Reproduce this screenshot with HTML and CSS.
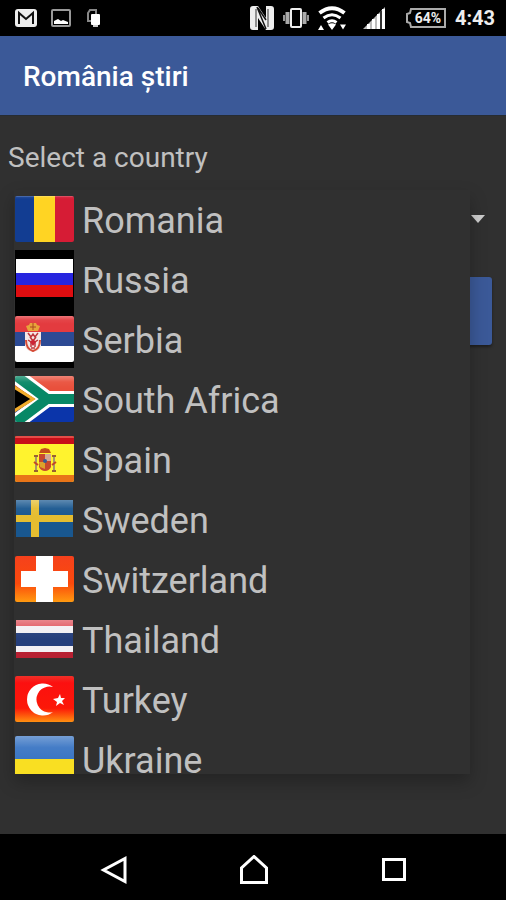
FILE: index.html
```
<!DOCTYPE html>
<html lang="ro">
<head>
<title>România știri</title>
<meta charset="utf-8">
<meta name="viewport" content="width=device-width, initial-scale=1.0">
<link rel="stylesheet" href="styles.css">
</head>
<body>
<div class="statusBar">
	<div class="notifications">
		<svg width="22" height="18" viewBox="0 0 22 18"><rect width="22" height="18" rx="3" fill="#eee"/><path d="M4 15V4l7 6 7-6v11" fill="none" stroke="#111" stroke-width="2"/></svg>
		<svg width="20" height="18" viewBox="0 0 20 18"><rect x="1" y="1" width="18" height="16" rx="1" fill="none" stroke="#999" stroke-width="2"/><path d="M3 15v-3l4-2 3 2 2-1 5 2v2z" fill="#fff"/></svg>
		<svg width="16" height="18" viewBox="0 0 16 18"><path d="M6 12H3V4l2-3h6v4" fill="none" stroke="#888" stroke-width="2"/><rect x="6" y="5" width="9" height="11" rx="1" fill="#fff"/><path d="M8 16h5v2H8z" fill="#ccc"/></svg>
	</div>
	<div class="indicators">
		<svg width="24" height="24" viewBox="0 0 24 24"><path d="M3 0h5l8 12V0h5q3 0 3 3v18q0 3-3 3h-5L8 12v12H3q-3 0-3-3V3q0-3 3-3z" fill="#eee"/><path d="M6 3v18M18 3v18" stroke="#333" stroke-width="1"/><path d="M7 1l9 22M8 2l8 12" stroke="#111" stroke-width="1.500"/></svg>
		<svg width="26" height="20" viewBox="0 0 26 20"><rect x="8" y="1" width="10" height="18" rx="1" fill="none" stroke="#eee" stroke-width="2"/><path d="M4.500 4v12M21.500 4v12" stroke="#aaa" stroke-width="4"/><path d="M1 7v6M25 7v6" stroke="#999" stroke-width="2"/></svg>
		<svg class="wifiIcon" width="28" height="24" viewBox="0 0 28 24"><g fill="none" stroke="#fff" stroke-width="4"><path d="M1.500 7Q14-2.500 26.500 7"/><path d="M5.500 12q8.500-6.500 17 0" stroke-width="3"/><path d="M9.500 16.500q4.500-3.500 9 0" stroke-width="3"/></g><path d="M10 18.500q4-2.500 8 0L14 24zM0 24l3-5 3 5zM22 18.500h6l-3 5z" fill="#fff"/></svg>
		<svg class="signalIcon" width="22" height="22" viewBox="0 0 22 22"><path d="M0 22L22 0v22z" fill="#bbb"/><path d="M18 4v18" stroke="#333" stroke-width="2"/><path d="M20.500 2v20M15.500 7v15M10.500 12v10M5.500 17v5" stroke="#fff" stroke-width="3"/></svg>
		<div class="battery">
			<svg width="40" height="20" viewBox="0 0 40 20"><path d="M5 1h34v18H5l-1-4-3-1V6l3-1z" fill="none" stroke="#aaa" stroke-width="2"/></svg>
			<span class="batteryLevel">64%</span>
		</div>
		<span class="clock">4:43</span>
	</div>
</div>
<header class="appBar">
	<h1>România știri</h1>
</header>
<main class="content">
	<label class="countryLabel" for="country">Select a country</label>
	<div class="spinner">
		<select id="country">
			<option value="ro" selected>Romania</option>
			<option value="ru">Russia</option>
			<option value="rs">Serbia</option>
			<option value="za">South Africa</option>
			<option value="es">Spain</option>
			<option value="se">Sweden</option>
			<option value="ch">Switzerland</option>
			<option value="th">Thailand</option>
			<option value="tr">Turkey</option>
			<option value="ua">Ukraine</option>
		</select>
		<svg class="caret" width="14" height="8" viewBox="0 0 14 8"><path d="M0 0h14L7 8z" fill="#ccc"/></svg>
	</div>
	<button class="submitButton" type="button" aria-label="OK"></button>

	<ul class="countryList" role="listbox" aria-label="Select a country">
		<li class="country" role="option" aria-selected="true">
			<svg class="flag" viewBox="0 0 60 60">
				<defs>
					<linearGradient id="shine" x2="0" y2="1"><stop offset="0" stop-color="#fff" stop-opacity=".3"/><stop offset=".5" stop-color="#fff" stop-opacity=".05"/><stop offset="1" stop-color="#fff" stop-opacity="0"/></linearGradient>
					<linearGradient id="fire" x2="0" y2="1"><stop offset="0" stop-color="#f5411c"/><stop offset=".6" stop-color="#fb4a0c"/><stop offset="1" stop-color="#ff9a10"/></linearGradient>
					<linearGradient id="turk" x2="0" y2="1"><stop offset="0" stop-color="#f03028"/><stop offset=".15" stop-color="#fc1010"/><stop offset=".7" stop-color="#fc1808"/><stop offset="1" stop-color="#ff9010"/></linearGradient>
					<clipPath id="round"><rect x="1" y="6" width="59" height="46" rx="2"/></clipPath>
				</defs>
				<g clip-path="url(#round)"><path d="M1 6h19v46H1z" fill="#123d92"/><path d="M20 6h21v46H20z" fill="#ffd423"/><path d="M41 6h19v46H41z" fill="#d61c35"/><path d="M1 6h59v3H1z" fill="url(#shine)"/></g>
			</svg>
			<span class="countryName">Romania</span>
		</li>
		<li class="country" role="option">
			<svg class="flag" viewBox="0 0 60 60"><path d="M1 0h59v60H1z" fill="#000"/><path d="M2 9h57v14H2z" fill="#fff"/><path d="M2 23h57v12H2z" fill="#2725df"/><path d="M2 35h57v12H2z" fill="#df0d10"/></svg>
			<span class="countryName">Russia</span>
		</li>
		<li class="country" role="option">
			<svg class="flag" viewBox="0 0 60 60">
				<path d="M1 0h59v58H1z" fill="#000"/>
				<g clip-path="url(#round)"><path d="M1 6h59v16H1z" fill="#e33b3f"/><path d="M1 22h59v14H1z" fill="#2c4a94"/><path d="M1 36h59v16H1z" fill="#fff"/><path d="M1 6h59v8H1z" fill="url(#shine)"/></g>
				<path d="M14 21l-2-5 3-1 1-2h6l1 2 3 1-2 5z" fill="#e8a33a"/><path d="M16 17h6M19 13v7" stroke="#a9481e"/>
				<path d="M11 22h16v14q-1 5-8 6-7-1-8-6z" fill="#f4e7e5"/>
				<path d="M12 30q0 9 7 11 7-2 7-11" fill="none" stroke="#d64a35" stroke-width="2"/>
				<path d="M14 23l3 4 2-3 2 3 3-4M16 27l3 4 3-4M14 30l3 2v5M24 30l-3 2v5M17 38h4" fill="none" stroke="#bd363c" stroke-width="1.500"/>
				<path d="M19 29l3 3-3 4-3-4z" fill="#cc2435"/>
			</svg>
			<span class="countryName">Serbia</span>
		</li>
		<li class="country" role="option">
			<svg class="flag" viewBox="0 0 60 60">
				<g clip-path="url(#round)"><path d="M1 6h59v23H1z" fill="#e9503c"/><path d="M1 29h59v23H1z" fill="#0b35aa"/><path d="M-3 2L33 29H60M-3 56L33 29" fill="none" stroke="#fff" stroke-width="16"/><path d="M-3 2L33 29H60M-3 56L33 29" fill="none" stroke="#078866" stroke-width="10"/><path d="M1 16l20 13L1 42z" fill="#000"/><path d="M0 17l19 12L0 41" fill="none" stroke="#f2ac2c" stroke-width="3"/><path d="M1 6h59v12H1z" fill="url(#shine)"/></g>
			</svg>
			<span class="countryName">South Africa</span>
		</li>
		<li class="country" role="option">
			<svg class="flag" viewBox="0 0 60 60">
				<g clip-path="url(#round)"><path d="M1 6h59v46H1z" fill="#fff32e"/><path d="M1 6h59v8H1z" fill="#c80f19"/><path d="M1 6h59v2H1z" fill="#e44c48"/><path d="M1 45h59v7H1z" fill="#e87518"/></g>
				<path d="M25 23l2-4 4-1 4 1 2 4z" fill="#c44d1b"/><path d="M22 27v13M40 27v13" stroke="#a89866" stroke-width="2"/><path d="M20 26h4M38 26h4M20 41h4M38 41h4" stroke="#996032" stroke-width="2"/><path d="M20 32l4 3M38 35l4-3" stroke="#c24628" stroke-width="2"/>
				<path d="M25 24h12v13q-2 4-6 4t-6-4z" fill="#c8482c"/><path d="M31 24h6v7h-6z" fill="#d4a895"/><path d="M25 32h6v7l-5-2z" fill="#dda22a"/><circle cx="31" cy="31" r="2" fill="#395b92"/>
			</svg>
			<span class="countryName">Spain</span>
		</li>
		<li class="country" role="option">
			<svg class="flag" viewBox="0 0 60 60"><path d="M2 10h57v37H2z" fill="#19578f"/><path d="M17 10h8v37h-8zM2 25h57v7H2z" fill="#e5bd30"/><path d="M2 10h57v17H2z" fill="url(#shine)"/></svg>
			<span class="countryName">Sweden</span>
		</li>
		<li class="country" role="option">
			<svg class="flag" viewBox="0 0 60 60"><rect x="1" y="6" width="59" height="46" rx="2" fill="url(#fire)"/><path d="M22 6h17v15h15v16H39v15H22V37H7V21h15z" fill="#fff"/></svg>
			<span class="countryName">Switzerland</span>
		</li>
		<li class="country" role="option">
			<svg class="flag" viewBox="0 0 60 60"><path d="M2 10h57v38H2z" fill="#f3f0f4"/><path d="M2 10h57v6H2z" fill="#e0525b"/><path d="M2 23h57v13H2z" fill="#263f7c"/><path d="M2 42h57v6H2z" fill="#b82032"/><path d="M2 10h57v19H2z" fill="url(#shine)"/></svg>
			<span class="countryName">Thailand</span>
		</li>
		<li class="country" role="option">
			<svg class="flag" viewBox="0 0 60 60"><rect x="1" y="6" width="59" height="46" rx="2" fill="url(#turk)"/><path d="M39 17a16 16 0 1 0 0 25 13 13 0 1 1 0-25z" fill="#fff"/><path d="M46 24l1 4 4 0-3 3 2 4-4-2-4 3 1-4-4-3 5-1z" fill="#fff"/></svg>
			<span class="countryName">Turkey</span>
		</li>
		<li class="country" role="option">
			<svg class="flag" viewBox="0 0 60 60"><g clip-path="url(#round)"><path d="M1 6h59v23H1z" fill="#3b76c4"/><path d="M1 29h59v23H1z" fill="#f9df22"/><path d="M1 6h59v23H1z" fill="url(#shine)"/></g></svg>
			<span class="countryName">Ukraine</span>
		</li>
	</ul>
</main>
<nav class="navBar">
	<button type="button" aria-label="Back"><svg width="28" height="30" viewBox="0 0 28 30"><path d="M25 3.500v23L3.500 15z" fill="none" stroke="#fff" stroke-width="3"/></svg></button>
	<button type="button" aria-label="Home"><svg width="28" height="30" viewBox="0 0 28 30"><path d="M1.500 27.500V13L14 1.500 26.500 13v14.500z" fill="none" stroke="#fff" stroke-width="3"/></svg></button>
	<button type="button" aria-label="Recent apps"><svg width="28" height="30" viewBox="0 0 28 30"><path d="M3.500 4.500h21v20h-21z" fill="none" stroke="#fff" stroke-width="3"/></svg></button>
</nav>
</body>
</html>
```
FILE: styles.css
```
*{
	padding:0;
	margin:0;
	box-sizing:border-box;
}
body{
	min-height:100vh;
	display:flex;
	flex-direction:column;
	background:#303030;
	color:#c0c0c0;
	font-family:Roboto, sans-serif;
}
svg{
	display:block;
	flex-shrink:0;
}
button{
	border:0;
	background:none;
}
.statusBar{
	display:flex;
	align-items:center;
	justify-content:space-between;
	height:36px;
	padding:0 11px 0 15px;
	background:#000;
	color:#eee;
}
.notifications,
.indicators{
	display:flex;
	align-items:center;
}
.notifications{
	gap:14px;
}
.indicators{
	gap:9px;
}
.wifiIcon{
	margin-right:8px;
}
.signalIcon{
	margin-right:12px;
}
.battery{
	display:grid;
	align-items:center;
	justify-items:center;
}
.battery > *{
	grid-area:1 / 1;
}
.batteryLevel{
	padding-left:4px;
	font-size:14px;
	font-weight:700;
}
.clock{
	font-size:20px;
	font-weight:700;
}
.appBar{
	display:flex;
	align-items:center;
	height:79px;
	padding:2px 23px 0;
	background:#3b5998;
	color:#fff;
}
.appBar h1{
	font-size:28px;
	font-weight:500;
}
.content{
	position:relative;
	flex:1;
	display:flex;
	flex-direction:column;
	min-height:300px;
	padding:26px 14px 0 8px;
	border-top:1px solid #262c33;
}
.countryLabel{
	font-size:28px;
	line-height:32px;
}
.spinner{
	display:flex;
	align-items:center;
	height:60px;
	margin-top:15px;
	padding-right:7px;
}
.spinner select{
	flex:1;
	height:60px;
	padding-left:74px;
	border:0;
	appearance:none;
	background:none;
	color:inherit;
	font:inherit;
	font-size:36px;
}
.submitButton{
	height:68px;
	margin:28px 0 0 8px;
	border-radius:3px;
	background:#3b5998;
	box-shadow:0 2px 3px rgba(0,0,0,0.4);
}

/* open drop-down, drawn over the form */
.countryList{
	position:absolute;
	top:74px;
	right:36px;
	bottom:60px;
	left:14px;
	overflow:hidden;
	list-style:none;
	background:#303030;
	box-shadow:0 8px 16px rgba(0,0,0,0.25);
}
.country{
	display:flex;
	align-items:center;
	gap:8px;
	height:60px;
	font-size:36px;
	line-height:42px;
}
.countryName{
	padding-top:2px;
}
.flag{
	width:60px;
	height:60px;
}
.navBar{
	display:flex;
	align-items:center;
	justify-content:center;
	gap:112px;
	height:66px;
	padding:5px 0 0 2px;
	background:#000;
}
```
